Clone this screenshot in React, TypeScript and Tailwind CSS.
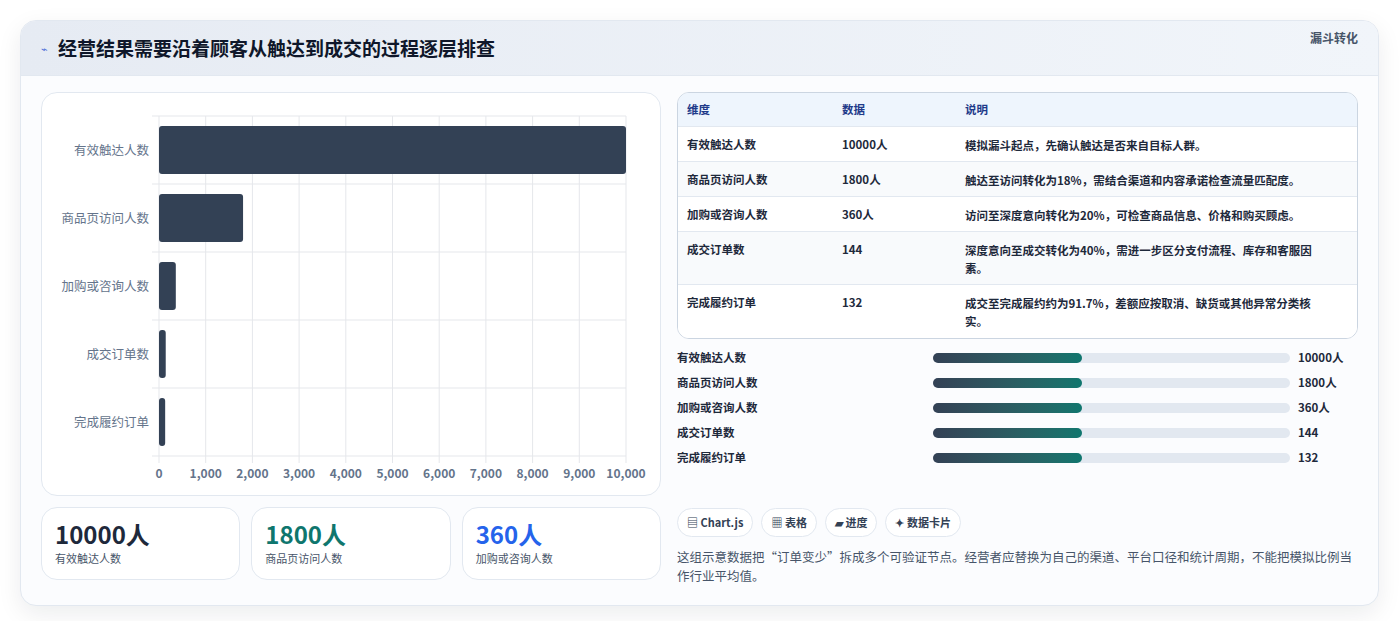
import React from "react";

const rows = [
  { n: "有效触达人数", v: "10000人", raw: 10000, d: "模拟漏斗起点，先确认触达是否来自目标人群。", h: "h-[35px]" },
  { n: "商品页访问人数", v: "1800人", raw: 1800, d: "触达至访问转化为18%，需结合渠道和内容承诺检查流量匹配度。", h: "h-[35px]" },
  { n: "加购或咨询人数", v: "360人", raw: 360, d: "访问至深度意向转化为20%，可检查商品信息、价格和购买顾虑。", h: "h-[35px]" },
  { n: "成交订单数", v: "144", raw: 144, d: "深度意向至成交转化为40%，需进一步区分支付流程、库存和客服因素。", h: "h-[53px]" },
  { n: "完成履约订单", v: "132", raw: 132, d: "成交至完成履约约为91.7%，差额应按取消、缺货或其他异常分类核实。", h: "h-[54px]" },
];

const font = { fontFamily: '"Noto Sans CJK SC", "Noto Sans", sans-serif' };

function Chart() {
  const ticks = [0, 1000, 2000, 3000, 4000, 5000, 6000, 7000, 8000, 9000, 10000];
  const W = 467;
  return (
    <div className="relative h-[404px] rounded-2xl border border-[#e2e8f0] bg-white">
      <svg width="619" height="404" className="absolute left-0 top-0">
        {ticks.map((t, i) => {
          const x = 117 + (W * i) / 10;
          return (
            <g key={t}>
              <line x1={x} x2={x} y1={23} y2={370} stroke="#e5e7eb" />
              <text x={x} y={385} textAnchor="middle" fontSize="12" fill="#64748b" fontWeight="600" style={font}>
                {t.toLocaleString("en-US")}
              </text>
            </g>
          );
        })}
        {[0, 1, 2, 3, 4, 5].map((i) => (
          <line key={i} x1={110} x2={584} y1={23 + i * 68} y2={23 + i * 68} stroke="#e5e7eb" />
        ))}
        {rows.map((r, i) => {
          const y = 23 + i * 68;
          return (
            <g key={r.n}>
              <rect x={117} y={y + 10} width={Math.max(6, (W * r.raw) / 10000)} height={48} rx={3} fill="#334155" />
              <text x={107} y={y + 39} textAnchor="end" fontSize="12.5" fill="#64748b" style={font}>
                {r.n}
              </text>
            </g>
          );
        })}
      </svg>
    </div>
  );
}

export default function App() {
  return (
    <div className="min-h-[621px] bg-white p-5" style={font}>
      <div className="overflow-hidden rounded-2xl border border-[#e2e8f0] bg-[#fbfcfe] shadow-[0_8px_24px_rgba(15,23,42,0.08)]">
        <div className="flex h-[55px] items-center justify-between border-b border-[#e2e8f0] bg-gradient-to-r from-[#e6ebf3] to-[#f1f5fa] px-5">
          <div className="flex items-center gap-2.5">
            <span className="text-[11px] text-[#4f6fd8]">⌁</span>
            <h1 className="text-[19px] font-bold text-[#0f172a]">经营结果需要沿着顾客从触达到成交的过程逐层排查</h1>
          </div>
          <span className="-mt-5 text-[12px] font-bold text-[#475569]">漏斗转化</span>
        </div>
        <div className="flex gap-4 px-5 pb-5 pt-4">
          <div className="flex w-[620px] flex-col gap-[11px]">
            <Chart />
            <div className="grid grid-cols-3 gap-[11px]">
              {[
                ["10000人", "text-[#1e293b]", "有效触达人数"],
                ["1800人", "text-[#0f766e]", "商品页访问人数"],
                ["360人", "text-[#2563eb]", "加购或咨询人数"],
              ].map(([v, c, l]) => (
                <div key={l} className="h-[73px] rounded-2xl border border-[#e2e8f0] bg-white px-[13px] pt-[10px]">
                  <div className={`text-[24px] font-bold leading-[32px] ${c}`}>{v}</div>
                  <div className="text-[11px] text-[#475569]">{l}</div>
                </div>
              ))}
            </div>
          </div>
          <div className="flex flex-1 flex-col">
            <div className="overflow-hidden rounded-xl border border-[#cbd5e1] bg-white text-[11.5px] text-[#1e293b]">
              <div className="flex h-[33px] items-center bg-[#eef5fd] font-bold text-[#1e3a8a]">
                <div className="w-[164px] pl-[9px]">维度</div>
                <div className="w-[123px]">数据</div>
                <div className="flex-1">说明</div>
              </div>
              {rows.map((r, i) => (
                <div key={r.n} className={`flex ${r.h} items-start border-t border-[#e2e8f0] pt-[9px] font-semibold ${i % 2 ? "bg-[#f8fafc]" : "bg-white"}`}>
                  <div className="w-[164px] pl-[9px]">{r.n}</div>
                  <div className="w-[123px]">{r.v}</div>
                  <div className="flex-1 pr-6 leading-[18px]">{r.d}</div>
                </div>
              ))}
            </div>
            <div className="mt-[10px] flex flex-col gap-[7px]">
              {rows.map((r) => (
                <div key={r.n} className="flex h-[18px] items-center text-[11.5px] font-semibold text-[#1e293b]">
                  <div className="w-[256px]">{r.n}</div>
                  <div className="h-[10px] w-[357px] rounded-full bg-[#e2e8f0]">
                    <div className="h-[10px] w-[149px] rounded-full bg-gradient-to-r from-[#334155] to-[#0f766e]" />
                  </div>
                  <div className="ml-2 font-bold">{r.v}</div>
                </div>
              ))}
            </div>
            <div className="mt-[41px] flex gap-2">
              {["▤ Chart.js", "▦ 表格", "▰ 进度", "✦ 数据卡片"].map((c) => (
                <span key={c} className="rounded-full border border-[#e2e8f0] bg-white px-[9px] py-[5px] text-[11px] font-bold text-[#334155]">
                  {c}
                </span>
              ))}
            </div>
            <p className="mt-[10px] text-[12.5px] leading-[19px] text-[#475569]">
              这组示意数据把“订单变少”拆成多个可验证节点。经营者应替换为自己的渠道、平台口径和统计周期，不能把模拟比例当作行业平均值。
            </p>
          </div>
        </div>
      </div>
    </div>
  );
}
